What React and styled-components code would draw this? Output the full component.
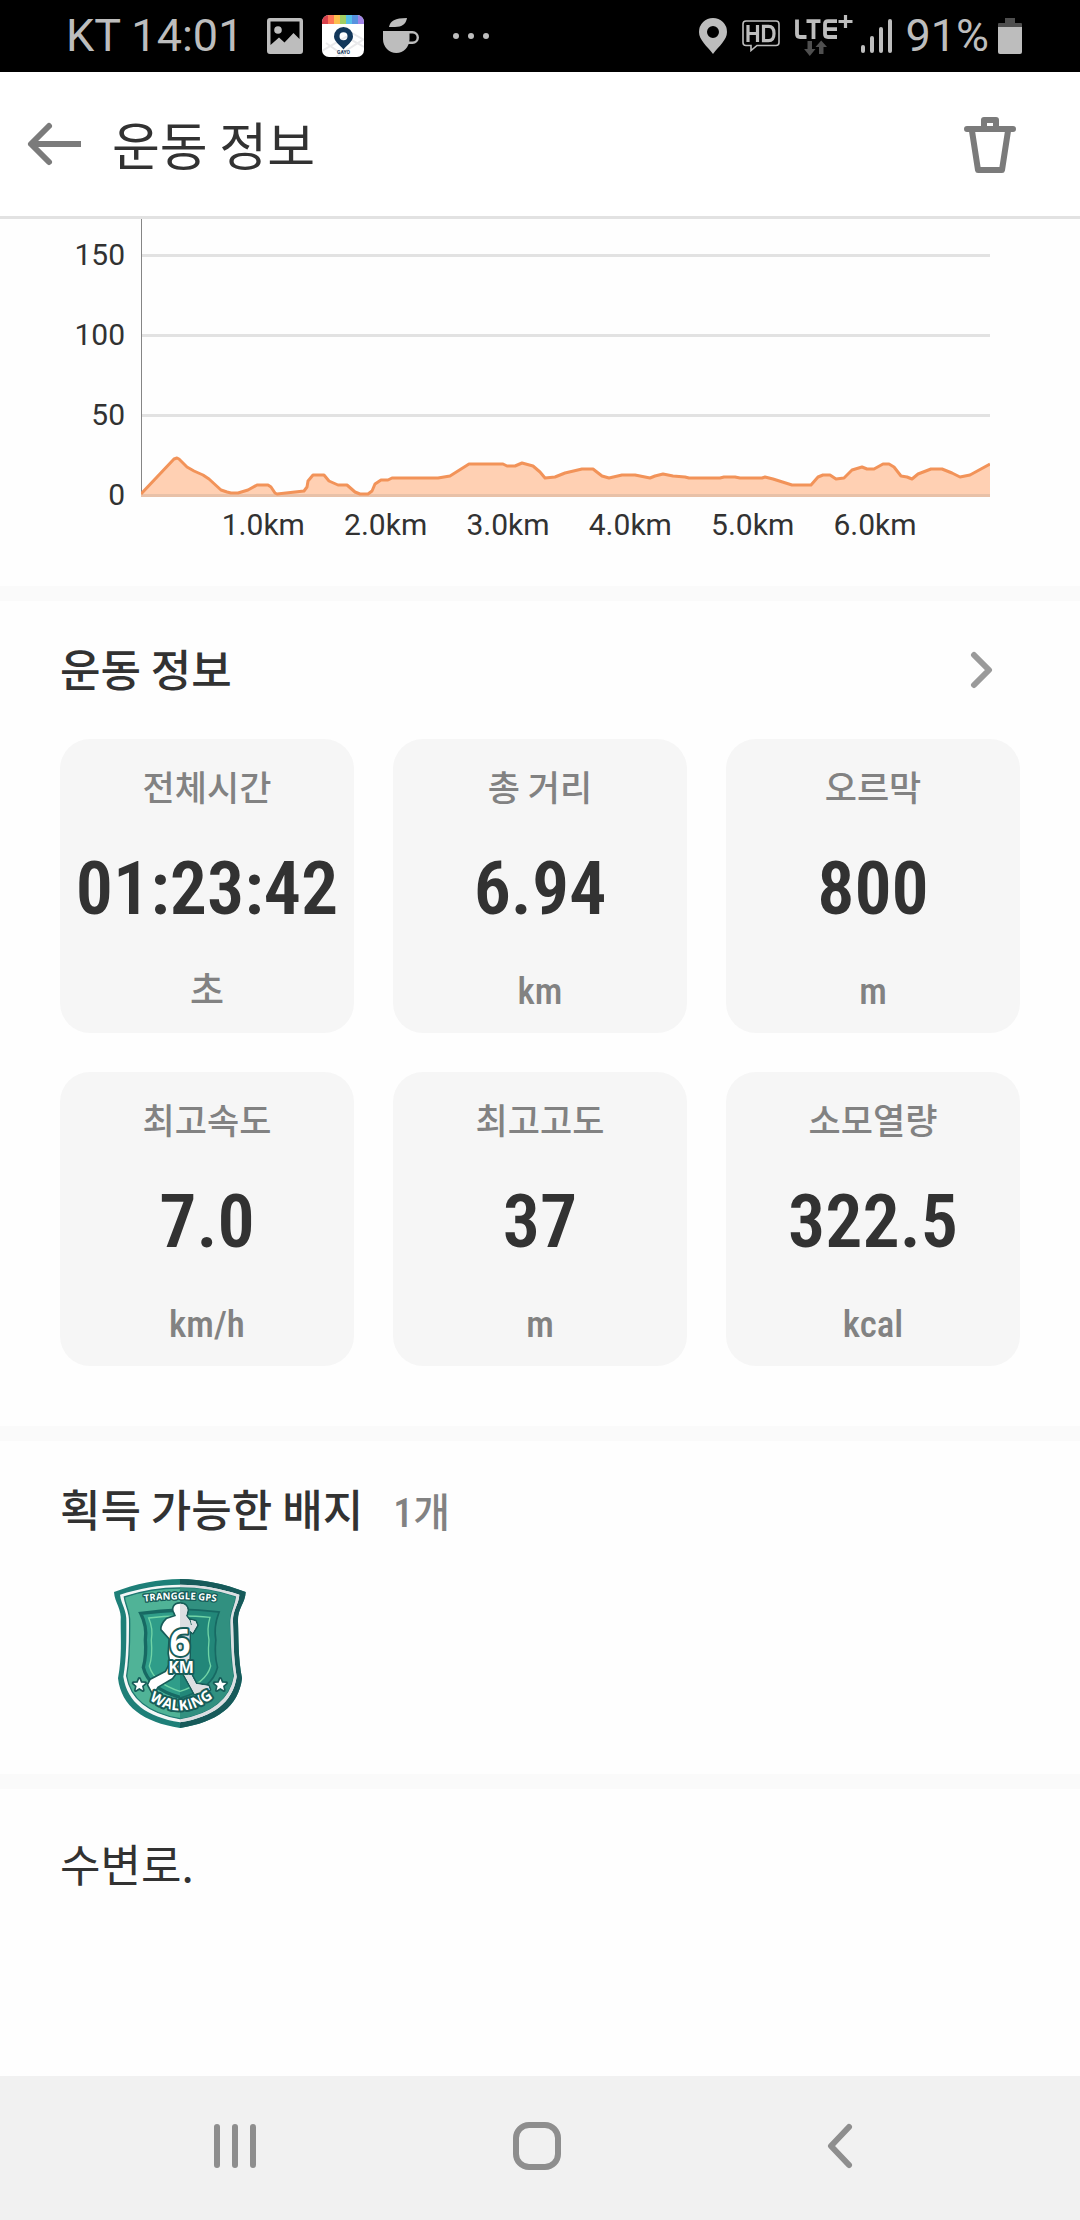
import React from "react";
import styled, { createGlobalStyle } from "styled-components";

const GlobalStyle = createGlobalStyle`
  *, *::before, *::after { box-sizing: border-box; }
  body {
    margin: 0;
    background: #fefefe;
    color: #323232;
    font-family: "Noto Sans CJK KR", "Noto Sans", sans-serif;
  }
  button { margin: 0; padding: 0; border: 0; background: none; cursor: pointer; }
  h1, h2, p, dl, dt, dd { margin: 0; }
  svg { display: block; }
`;

const Screen = styled.div`
  min-height: 100vh;
  display: flex;
  flex-direction: column;
`;

const StatusBar = styled.div`
  height: 72px;
  padding: 0 58px 0 66px;
  display: flex;
  align-items: center;
  justify-content: space-between;
  background: #000;
  color: #bdbdbd;
  font: 400 45px/72px Roboto, sans-serif;
  white-space: nowrap;
`;

const StatusGroup = styled.div`
  display: flex;
  align-items: center;
  gap: ${(p) => p.$gap}px;
`;

const Header = styled.header`
  height: 147px;
  padding: 0 60px 0 24px;
  display: flex;
  align-items: center;
  border-bottom: 3px solid #e2e2e2;
  background: #fff;
`;

const IconButton = styled.button`
  display: flex;
  flex: none;
`;

const Title = styled.h1`
  flex: 1;
  padding-left: 28px;
  font-size: 52px;
  line-height: 76px;
  font-weight: 400;
`;

const Chart = styled.section`
  display: flex;
  padding-right: 90px;
  padding-bottom: 43px;
  font: 400 30px/36px Roboto, sans-serif;
`;

const YAxis = styled.div`
  width: 125px;
  margin-right: 16px;
  flex: none;
  display: flex;
  flex-direction: column;
  gap: 8px;
  height: 278px;
  line-height: 72px;
  text-align: right;
`;

const PlotArea = styled.div`
  flex: 1;
  min-width: 0;
`;

const Plot = styled.svg`
  width: 100%;
  height: 278px;
`;

const XAxis = styled.div`
  display: grid;
  grid-template-columns: 0.5fr repeat(6, 1fr) 0.44fr;
  margin-top: 10px;
  text-align: center;

  span:first-child { grid-column: 2; }
`;

const Section = styled.section`
  border-top: 15px solid #fafafa;
  padding: ${(p) => p.$pad};
`;

const SectionHead = styled.div`
  display: flex;
  align-items: center;
  justify-content: space-between;
  padding-right: 23px;
`;

const Heading = styled.h2`
  font-size: 44px;
  line-height: 64px;
  font-weight: 500;
`;

const Count = styled.span`
  margin-left: 30px;
  color: #828282;
  font-family: "Roboto Condensed", "Noto Sans CJK KR", sans-serif;
  font-size: 40px;
  line-height: 40px;
`;

const Cards = styled.dl`
  display: grid;
  grid-template-columns: repeat(3, 1fr);
  gap: 39px;
  margin-top: 39px;
`;

const Card = styled.div`
  height: 294px;
  border-radius: 30px;
  background: #f6f6f6;
  text-align: center;
  display: flex;
  flex-direction: column;
  justify-content: space-between;
  padding: 22px 0 16px;
`;

const Label = styled.dt`
  color: #828282;
  font-size: 35px;
  line-height: 50px;
  font-weight: 500;
`;

const Value = styled.dd`
  font: 600 74px/96px "Roboto Condensed", Roboto, sans-serif;
`;

const Unit = styled.dd`
  color: #828282;
  font-family: "Roboto Condensed", "Noto Sans CJK KR", sans-serif;
  font-size: 37px;
  line-height: 50px;
  font-weight: 500;
`;

const BadgeSlot = styled.div`
  margin-top: 20px;
  padding-left: 40px;
`;

const Memo = styled.p`
  font-size: 44px;
  line-height: 64px;
`;

const NavBar = styled.nav`
  margin-top: auto;
  height: 144px;
  padding: 0 90px 4px 84px;
  display: grid;
  grid-template-columns: repeat(3, 1fr);
  place-items: center;
  background: #f1f1f1;
`;

const profile = [
  [0, 275], [33, 240], [36, 239], [38, 240], [46, 248], [53, 252], [62, 256], [68, 260], [80, 271], [86, 273],
  [90, 274], [97, 274], [107, 271], [116, 266], [127, 266], [130, 268], [134, 274], [136, 275], [163, 272],
  [166, 268], [167, 262], [172, 256], [183, 256], [188, 262], [197, 266], [206, 266], [214, 273], [219, 275],
  [227, 275], [231, 272], [234, 265], [240, 261], [247, 261], [251, 259], [297, 259], [309, 257], [328, 245],
  [362, 245], [366, 247], [374, 247], [381, 244], [392, 247], [399, 253], [404, 259], [414, 258], [424, 254],
  [441, 250], [452, 250], [461, 257], [468, 259], [481, 256], [494, 256], [509, 259], [514, 257], [522, 255],
  [532, 257], [544, 258], [548, 259], [579, 259], [583, 258], [594, 258], [599, 259], [621, 259], [624, 258],
  [632, 260], [651, 266], [670, 266], [677, 258], [682, 256], [689, 256], [695, 260], [703, 259], [711, 251],
  [721, 248], [726, 250], [733, 250], [742, 245], [748, 245], [753, 248], [760, 257], [766, 258], [771, 260],
  [777, 255], [790, 250], [801, 250], [811, 254], [819, 258], [829, 256], [849, 245],
];
const linePoints = profile.map((p) => p.join(",")).join(" ");

const stats = [
  ["전체시간", "01:23:42", "초"],
  ["총 거리", "6.94", "km"],
  ["오르막", "800", "m"],
  ["최고속도", "7.0", "km/h"],
  ["최고고도", "37", "m"],
  ["소모열량", "322.5", "kcal"],
];

const PictureIcon = () => (
  <svg width="36" height="36" viewBox="0 0 36 36" fill="#bdbdbd">
    <path fillRule="evenodd" d="M3 0h30a3 3 0 0 1 3 3v30a3 3 0 0 1-3 3H3a3 3 0 0 1-3-3V3a3 3 0 0 1 3-3zM3.500 3.500V27l8.500-7.500 5.500 5L26.500 15l6 6V3.500z" />
    <circle cx="11" cy="12" r="3.800" />
  </svg>
);

const rainbow = ["#d8414c", "#ff7658", "#fcc04e", "#a2cf63", "#55bfe8", "#5792df", "#a184e6"];

const MapAppIcon = () => (
  <svg width="42" height="42" viewBox="0 0 42 42">
    <clipPath id="app-shape"><rect width="42" height="42" rx="7" /></clipPath>
    <g clipPath="url(#app-shape)">
      <rect width="42" height="42" fill="#fff" />
      <path d="M0 36l24-14 18 10M14 42l28-18M4 28l20 14M30 18l12 7" stroke="#e9e9eb" strokeWidth="2" fill="none" />
      {rainbow.map((c, i) => <rect key={c} x={i * 6} width="6" height="9" fill={c} />)}
      <path fillRule="evenodd" fill="#12375a" d="M21.500 12a9.500 9.500 0 0 1 9.500 9.500c0 5-6 8.500-9.500 13-3.500-4.500-9.500-8-9.500-13a9.500 9.500 0 0 1 9.500-9.500zm0 5.200a4 4 0 1 0 0 8 4 4 0 0 0 0-8z" />
      <text x="21.500" y="39" textAnchor="middle" fontFamily="Roboto, sans-serif" fontWeight="700" fontSize="5" fill="#12375a">GAYO</text>
    </g>
  </svg>
);

const CupIcon = () => (
  <svg width="36" height="36" viewBox="0 0 36 36" fill="#bdbdbd">
    <path d="M6 9C7 3 12 0 24 0 23 6 19 9 12 9z" />
    <path d="M0 13h26.500v8c0 8-6 14-13.200 14S0 29 0 21z" />
    <path d="M26 14.200h3.500a5.300 5.300 0 0 1 0 10.600H25" fill="none" stroke="#bdbdbd" strokeWidth="2.400" />
  </svg>
);

const DotsIcon = () => (
  <svg width="36" height="36" viewBox="0 0 36 36" fill="#bdbdbd">
    <circle cx="3" cy="18" r="3" /><circle cx="18" cy="18" r="3" /><circle cx="33" cy="18" r="3" />
  </svg>
);

const PinIcon = () => (
  <svg width="28" height="36" viewBox="0 0 28 36">
    <path fillRule="evenodd" fill="#bdbdbd" d="M14 0a14 14 0 0 1 14 14c0 8-8 14-14 22C8 28 0 22 0 14A14 14 0 0 1 14 0zm0 8a6 6 0 1 0 0 12 6 6 0 0 0 0-12z" />
  </svg>
);

const HdIcon = () => (
  <svg width="38" height="32" viewBox="0 0 38 32" fill="none" stroke="#bdbdbd">
    <path strokeWidth="1.600" d="M4 1h30a3 3 0 0 1 3 3v18.500a3 3 0 0 1-3 3H15L9 30.500V25.500H4a3 3 0 0 1-3-3V4a3 3 0 0 1 3-3z" />
    <path strokeWidth="3.200" d="M6 5v17M15.500 5v17M6 13.500h9.500M21.500 6.400v14.200h5q5.500 0 5.500-7.100t-5.500-7.100z" />
  </svg>
);

const LteIcon = () => (
  <svg width="58" height="42" viewBox="0 0 58 42">
    <g fill="none" stroke="#bdbdbd" strokeWidth="3.800">
      <path d="M2 4.500V19q0 3 3 3H11.500M11.500 6.200H25.500M18.500 6v18M42 6.200H33q-3 0-3 3V19q0 3 3 3h9M30 14.200h12" />
      <path strokeWidth="3.200" d="M50.500 0v13M43.500 6.500h14" />
    </g>
    <path fill="#4f4f4f" d="M12.500 26h4.500v8h3.500l-5.700 7-5.700-7h3.400zM24 39v-7h-3.500l5.700-6.500L32 32h-3.500v7z" />
  </svg>
);

const SignalIcon = () => (
  <svg width="32" height="34" viewBox="0 0 32 34" fill="#bdbdbd">
    <rect x="0" y="26" width="4" height="8" rx="2" /><rect x="9" y="17" width="4" height="17" rx="2" />
    <rect x="18" y="8" width="4" height="26" rx="2" /><rect x="27" y="0" width="4" height="34" rx="2" />
  </svg>
);

const BatteryIcon = () => (
  <svg width="24" height="36" viewBox="0 0 24 36">
    <path fill="#4f4f4f" d="M7 0h10v5h6q1 0 1 1v4H0V6q0-1 1-1h6z" />
    <path fill="#bdbdbd" d="M0 9h24v25q0 2-2 2H2q-2 0-2-2z" />
  </svg>
);

const BackIcon = () => (
  <svg width="60" height="48" viewBox="0 0 60 48" fill="none" stroke="#7b7b7b" strokeWidth="6" strokeLinejoin="round">
    <path d="M7 24h50" /><path d="M25 6L7 24l18 18" strokeLinecap="round" />
  </svg>
);

const TrashIcon = () => (
  <svg width="60" height="60" viewBox="0 0 60 60" fill="none" stroke="#7b7b7b" strokeWidth="6" strokeLinejoin="round" strokeLinecap="round">
    <path d="M7 15h46M24 14V6h12v8M12 17l6 39h24l6-39" />
  </svg>
);

const ChevronIcon = () => (
  <svg width="30" height="42" viewBox="0 0 30 42" fill="none" stroke="#9a9a9a" strokeWidth="6" strokeLinejoin="round" strokeLinecap="round">
    <path d="M7 8l15 15L7 38" />
  </svg>
);

const outer = "M240 57C303 57 375 72 437 96C436 130 412 145 414 185C416 240 414 290 426 355C416 440 350 487 240 504C130 487 64 440 54 355C66 290 62 240 62 185C66 145 44 130 42 96C105 72 177 57 240 57Z";
const rim = "M240 74C303 74 365 86 418 104C416 135 397 150 399 187C401 240 400 290 410 350C398 428 340 470 240 487C140 470 82 428 70 350C80 290 79 240 79 187C81 150 64 135 60 104C115 86 177 74 240 74Z";
const face = "M240 84C300 84 357 94 406 111C403 138 388 154 389 189C391 241 390 291 400 348C388 420 332 460 240 476C148 460 92 420 80 348C90 291 89 241 89 189C91 154 76 138 73 111C123 94 180 84 240 84Z";
const shield = "M240 150Q298 152 354 158Q338 200 345 240Q340 285 350 322Q335 385 240 412Q145 385 130 322Q140 285 136 240Q142 200 122 160Q182 152 240 150Z";

const runner = "M240 131C256 131 263 142 262 152L258 168L270 184L272 196L276 194L272 180L286 184L291 196L278 218L268 210V286L266 330L288 372L325 378L329 389L284 401L256 350L240 322L216 354L172 380L160 402L145 374L152 360L198 336L212 310L207 280L210 236L185 208Q184 194 201 177L228 168L224 158C216 146 222 131 240 131Z";

const Badge = () => (
  <svg width="160" height="180" viewBox="0 0 480 540" role="img" aria-label="TRANGGLE GPS 6 KM WALKING">
    <defs>
      <clipPath id="right-half"><rect x="240" width="240" height="540" /></clipPath>
      <path id="walking-arc" d="M128 402Q240 504 360 396" />
      <path id="name-arc" d="M120 127Q240 109 362 127" />
    </defs>
    <path d={outer} fill="#1e7f78" />
    <path d={outer} fill="#175a5a" clipPath="url(#right-half)" />
    <path d={rim} fill="#f4f7f7" />
    <path d={rim} fill="#dcdfe2" clipPath="url(#right-half)" />
    <path d={face} fill="#50b397" stroke="#1e7771" strokeWidth="4" />
    <path d={face} fill="#319080" clipPath="url(#right-half)" />
    <path d={shield} fill="#2f9d89" stroke="#176963" strokeWidth="10" />
    <path d={shield} fill="#228779" clipPath="url(#right-half)" />
    <path d="M240 168Q290 168 330 172Q320 205 327 240Q322 290 332 318Q318 370 240 394Q162 370 148 318Q158 290 154 240Q160 205 146 174Q190 168 240 168Z" fill="none" stroke="#70d4a6" strokeWidth="4" />
    <g stroke="#175d59" strokeLinejoin="round" paintOrder="stroke">
      <path d={runner} fill="#fff" strokeWidth="10" />
      <path d={runner} fill="#dcdfe2" stroke="none" clipPath="url(#right-half)" />
      <g fill="#fff" strokeWidth="10">
        <path d="M118 356l5 12 13 1-10 9 3 13-11-7-11 7 3-13-10-9 13-1z" />
        <path d="M361 356l5 12 13 1-10 9 3 13-11-7-11 7 3-13-10-9 13-1z" />
      </g>
      <g fill="#fff" fontFamily="'Open Sans', sans-serif" fontWeight="700" textAnchor="middle" strokeWidth="12">
        <text x="240" y="289" fontSize="110">6</text>
        <text x="243" y="339" fontSize="48">KM</text>
        <text fontSize="44"><textPath href="#walking-arc" startOffset="50%">WALKING</textPath></text>
        <text fontSize="29" strokeWidth="8"><textPath href="#name-arc" startOffset="50%">TRANGGLE GPS</textPath></text>
      </g>
    </g>
  </svg>
);

export default function App() {
  return (
    <Screen>
      <GlobalStyle />
      <StatusBar>
        <StatusGroup $gap={34}>
          <StatusGroup $gap={24}>
            <span>KT 14:01</span>
            <StatusGroup $gap={19}><PictureIcon /><MapAppIcon /><CupIcon /></StatusGroup>
          </StatusGroup>
          <DotsIcon />
        </StatusGroup>
        <StatusGroup $gap={12}>
          <StatusGroup $gap={8}>
            <StatusGroup $gap={15}><PinIcon /><HdIcon /><LteIcon /></StatusGroup>
            <SignalIcon />
          </StatusGroup>
          <StatusGroup $gap={9}><span>91%</span><BatteryIcon /></StatusGroup>
        </StatusGroup>
      </StatusBar>
      <Header>
        <IconButton type="button" aria-label="뒤로"><BackIcon /></IconButton>
        <Title>운동 정보</Title>
        <IconButton type="button" aria-label="삭제"><TrashIcon /></IconButton>
      </Header>
      <main>
        <Chart>
          <YAxis>{[150, 100, 50, 0].map((v) => <span key={v}>{v}</span>)}</YAxis>
          <PlotArea>
            <Plot viewBox="0 0 849 278" preserveAspectRatio="none">
              <path d="M0 36.500H849M0 116.500H849M0 196.500H849M0 276.500H849" stroke="#e2e2e2" strokeWidth="3" />
              <path d="M0.500 0V278" stroke="#858585" strokeWidth="1" />
              <polygon points={`0,278 ${linePoints} 849,278`} fill="#ffd0b3" />
              <path d="M0 276.500H849" stroke="#e8c1a8" strokeWidth="3" />
              <polyline points={linePoints} fill="none" stroke="#f29359" strokeWidth="3" strokeLinejoin="round" />
            </Plot>
            <XAxis>{[1, 2, 3, 4, 5, 6].map((k) => <span key={k}>{k}.0km</span>)}</XAxis>
          </PlotArea>
        </Chart>
        <Section $pad="35px 60px 60px">
          <SectionHead>
            <Heading>운동 정보</Heading>
            <IconButton type="button" aria-label="운동 정보 상세"><ChevronIcon /></IconButton>
          </SectionHead>
          <Cards>
            {stats.map(([label, value, unit]) => (
              <Card key={label}>
                <Label>{label}</Label>
                <Value>{value}</Value>
                <Unit>{unit}</Unit>
              </Card>
            ))}
          </Cards>
        </Section>
        <Section $pad="35px 60px 34px">
          <Heading>획득 가능한 배지<Count>1개</Count></Heading>
          <BadgeSlot><Badge /></BadgeSlot>
        </Section>
        <Section $pad="42px 60px 60px">
          <Memo>수변로.</Memo>
        </Section>
      </main>
      <NavBar>
        <IconButton type="button" aria-label="최근 앱">
          <svg width="48" height="48" viewBox="0 0 48 48" stroke="#8e8e8e" strokeWidth="6" strokeLinecap="round"><path d="M6 5v38M24 5v38M42 5v38" /></svg>
        </IconButton>
        <IconButton type="button" aria-label="홈">
          <svg width="48" height="48" viewBox="0 0 48 48" fill="none" stroke="#8e8e8e" strokeWidth="6"><rect x="3" y="3" width="42" height="42" rx="13" /></svg>
        </IconButton>
        <IconButton type="button" aria-label="이전">
          <svg width="30" height="48" viewBox="0 0 30 48" fill="none" stroke="#8e8e8e" strokeWidth="6" strokeLinecap="round" strokeLinejoin="round"><path d="M25 5L7 24l18 19" /></svg>
        </IconButton>
      </NavBar>
    </Screen>
  );
}
